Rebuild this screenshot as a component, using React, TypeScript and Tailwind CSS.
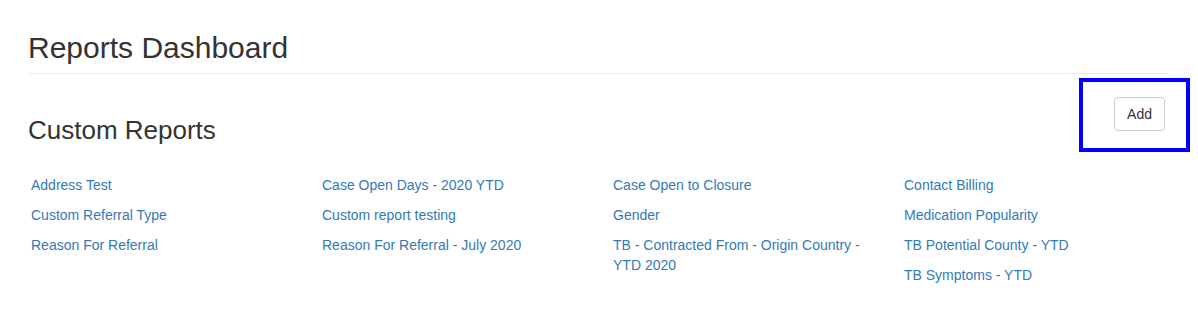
import React from "react";

const cols: string[][] = [
  ["Address Test", "Custom Referral Type", "Reason For Referral"],
  ["Case Open Days - 2020 YTD", "Custom report testing", "Reason For Referral - July 2020"],
  ["Case Open to Closure", "Gender", "TB - Contracted From - Origin Country - YTD 2020"],
  ["Contact Billing", "Medication Popularity", "TB Potential County - YTD", "TB Symptoms - YTD"],
];

export default function App() {
  return (
    <div
      className="relative w-[1198px] h-[312px] bg-white text-[#333] overflow-hidden"
      style={{ fontFamily: '"Liberation Sans", Arial, Helvetica, sans-serif' }}
    >
      <div className="ml-[28px] w-[1140px]">
        <div className="pt-[31px] pb-[9px] border-b border-[#eee]">
          <h1 className="text-[30px] leading-[33px] font-normal">Reports Dashboard</h1>
        </div>
        <div className="flex justify-between items-start mt-[23px]">
          <h2 className="mt-[19px] text-[26px] leading-[28px] font-normal">Custom Reports</h2>
          <button className="mr-[3px] h-[34px] px-[12px] py-[6px] text-[14px] leading-[20px] border border-[#ccc] rounded-[4px] bg-white text-[#333]">
            Add
          </button>
        </div>
        <div className="flex mt-[31px] ml-[3px]">
          {cols.map((col, i) => (
            <ul key={i} className="w-[291px] shrink-0 pr-[30px]">
              {col.map((t) => (
                <li key={t} className="mb-[10px] text-[14px] leading-[20px]">
                  <a href="#" className="text-[#337ab7]">
                    {t}
                  </a>
                </li>
              ))}
            </ul>
          ))}
        </div>
      </div>
      <div className="absolute left-[1079px] top-[78px] w-[111px] h-[74px] border-4 border-[#0000ff] pointer-events-none" />
    </div>
  );
}
